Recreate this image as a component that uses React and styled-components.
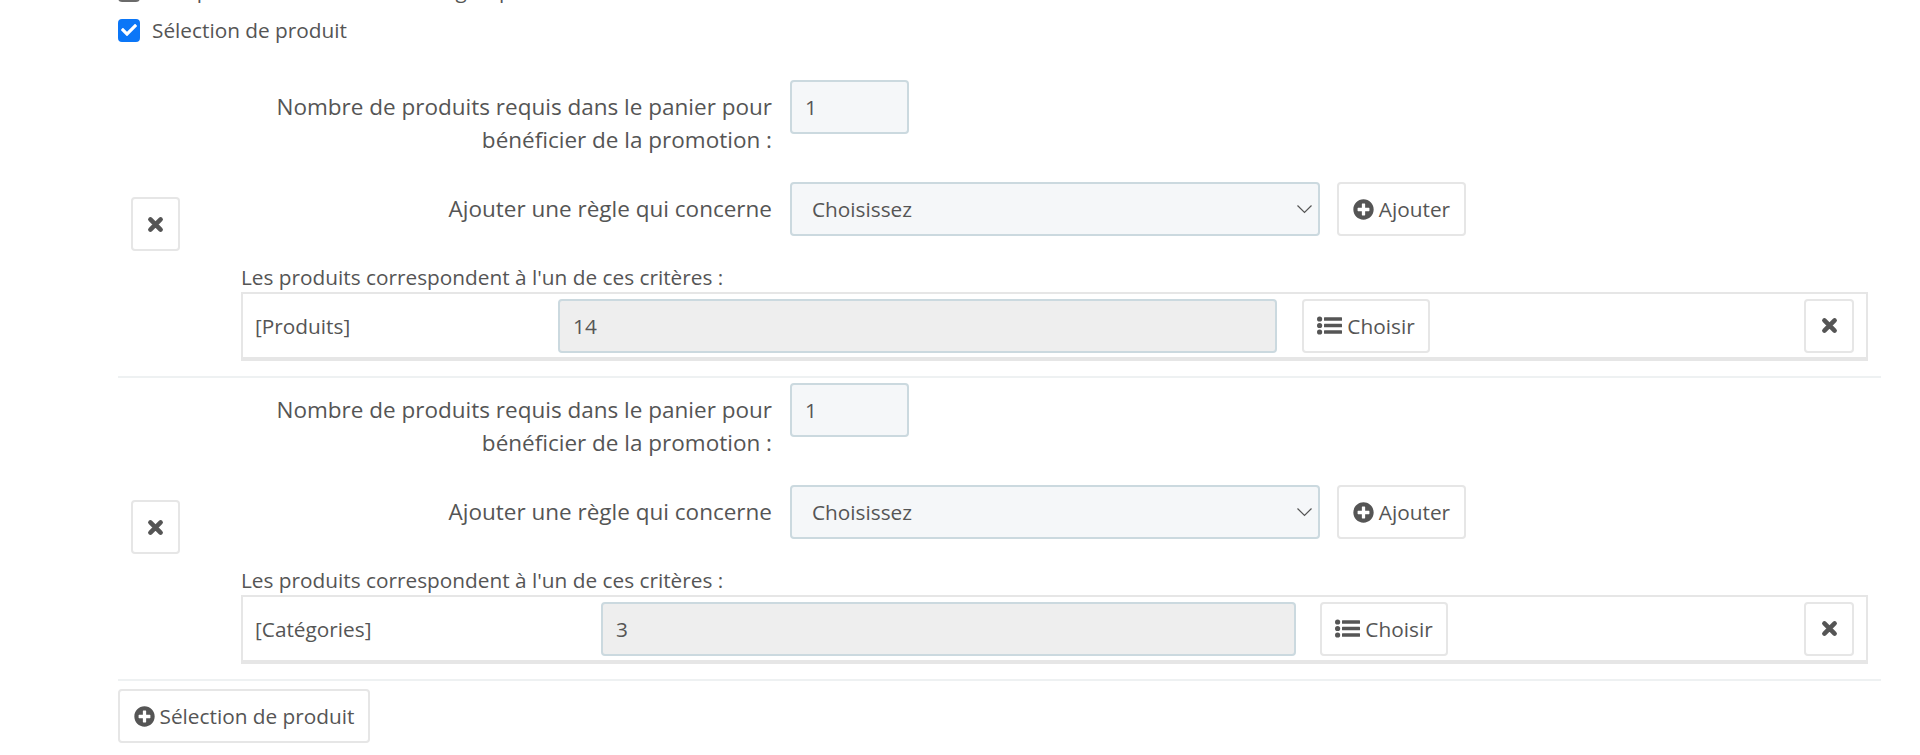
import React from "react";
import styled, { createGlobalStyle } from "styled-components";
import { FaCheck, FaPlusCircle } from "react-icons/fa";

const GlobalStyle = createGlobalStyle`
  html, body {
    margin: 0;
    height: 755px;
    overflow: hidden;
    background: #fff;
  }
  body {
    font-family: "Open Sans", "Liberation Sans", sans-serif;
    font-size: 20.8px;
    color: #555;
  }
`;

const Page = styled.div`
  height: 755px;
  overflow: hidden;
  padding: 0 39px 0 118px;
  box-sizing: border-box;
`;

const OptionList = styled.div`
  margin-top: -26px;
  display: flex;
  flex-direction: column;
  gap: 8px;
`;

const OptionRow = styled.label`
  display: flex;
  align-items: center;
  gap: 12px;
  height: 32px;
  line-height: 32px;
`;

const CheckBox = styled.span`
  width: 22px;
  height: 23px;
  flex: none;
  box-sizing: border-box;
  border-radius: 4px;
  display: flex;
  align-items: center;
  justify-content: center;
  color: #fff;
  font-size: 16px;
  background: ${(p) => (p.$checked ? "#0b76f7" : "#fff")};
  border: 2px solid ${(p) => (p.$checked ? "#0b76f7" : "#6b6b6b")};
`;

const Group = styled.div`
  display: flex;
  align-items: center;
  padding: ${(p) => p.$top}px 13px 15px 0;
  border-bottom: 2px solid #eef1f2;
`;

const RemoveCol = styled.div`
  width: 123px;
  flex: none;
  padding: 7px 0 0 13px;
  box-sizing: border-box;
`;

const Body = styled.div`
  flex: 1;
  min-width: 0;
`;

const FormRow = styled.div`
  display: grid;
  grid-template-columns: 549px auto;
  margin-bottom: ${(p) => p.$gap}px;
`;

const FieldLabel = styled.div`
  text-align: right;
  padding: ${(p) => p.$top}px 18px 0 0;
  font-size: 22.5px;
  line-height: 33px;
`;

const Controls = styled.div`
  display: flex;
  align-items: flex-start;
  gap: 17px;
`;

const TextInput = styled.input`
  display: block;
  width: ${(p) => p.$width}px;
  height: 54px;
  box-sizing: border-box;
  padding: 0 13px;
  flex: none;
  font: inherit;
  color: #555;
  background: ${(p) => (p.readOnly ? "#eeeeee" : "#f5f7f9")};
  border: 2px solid #cbd9df;
  border-radius: 4px;
  outline: none;
`;

const SelectWrap = styled.div`
  position: relative;
  width: 530px;
  height: 54px;
`;

const Select = styled.select`
  width: 100%;
  height: 100%;
  box-sizing: border-box;
  padding: 0 20px;
  font: inherit;
  color: #555;
  background: #f5f7f9;
  border: 2px solid #cbd9df;
  border-radius: 4px;
  appearance: none;
  outline: none;
`;

const Chevron = styled.svg`
  position: absolute;
  right: 7px;
  top: 21px;
  width: 17px;
  height: 11px;
  fill: none;
  stroke: #555;
  stroke-width: 1.2;
`;

const Button = styled.button`
  display: inline-flex;
  align-items: center;
  justify-content: center;
  gap: 5px;
  height: 54px;
  width: ${(p) => p.$width}px;
  flex: none;
  box-sizing: border-box;
  padding: 0;
  font: inherit;
  color: #555;
  background: #fff;
  border: 2px solid #e6e6e6;
  border-radius: 4px;
  white-space: nowrap;
  > svg {
    flex: none;
  }
  > svg.plus {
    font-size: 21px;
  }
`;

const CriteriaTitle = styled.div`
  line-height: 30px;
`;

const CriteriaBox = styled.div`
  display: flex;
  align-items: center;
  height: 69px;
  box-sizing: border-box;
  padding: 0 12px;
  border: 2px solid #e6e6e6;
  border-bottom-width: 4px;
`;

const CriteriaName = styled.div`
  width: ${(p) => p.$width}px;
  flex: none;
`;

const CriteriaChoose = styled.div`
  flex: 1;
  padding-left: ${(p) => p.$gap}px;
`;

const Footer = styled.div`
  margin-top: 8px;
`;

function CrossIcon() {
  return (
    <svg width="17" height="17" viewBox="0 0 17 17" fill="none" stroke="#555" strokeWidth="4.6" strokeLinecap="round">
      <path d="M3.4 3.4 13.6 13.6M13.6 3.4 3.4 13.6" />
    </svg>
  );
}

function ListIcon() {
  return (
    <svg width="25" height="19" viewBox="0 0 25 19" fill="#555">
      <circle cx="2.6" cy="3" r="2.6" />
      <circle cx="2.6" cy="9.5" r="2.6" />
      <circle cx="2.6" cy="16" r="2.6" />
      <rect x="7" y="1.2" width="18" height="3.6" rx="0.5" />
      <rect x="7" y="7.7" width="18" height="3.6" rx="0.5" />
      <rect x="7" y="14.2" width="18" height="3.6" rx="0.5" />
    </svg>
  );
}

function AddButton({ width, children }) {
  return (
    <Button type="button" $width={width}>
      <FaPlusCircle className="plus" />
      {children}
    </Button>
  );
}

function Rule({ top, kind, value, nameWidth, inputWidth, chooseGap }) {
  return (
    <Group $top={top}>
      <RemoveCol>
        <Button type="button" $width={49}>
          <CrossIcon />
        </Button>
      </RemoveCol>
      <Body>
        <FormRow $gap={26}>
          <FieldLabel $top={10}>
            Nombre de produits requis dans le panier pour
            <br />
            bénéficier de la promotion :
          </FieldLabel>
          <Controls>
            <TextInput $width={119} defaultValue="1" />
          </Controls>
        </FormRow>
        <FormRow $gap={26}>
          <FieldLabel $top={10}>Ajouter une règle qui concerne</FieldLabel>
          <Controls>
            <SelectWrap>
              <Select defaultValue="">
                <option value="">Choisissez</option>
              </Select>
              <Chevron viewBox="0 0 17 11">
                <path d="M1.5 2.5 8.5 9.5 15.5 2.5" />
              </Chevron>
            </SelectWrap>
            <AddButton width={129}>Ajouter</AddButton>
          </Controls>
        </FormRow>
        <CriteriaTitle>Les produits correspondent à l'un de ces critères :</CriteriaTitle>
        <CriteriaBox>
          <CriteriaName $width={nameWidth}>{kind}</CriteriaName>
          <TextInput $width={inputWidth} readOnly defaultValue={value} />
          <CriteriaChoose $gap={chooseGap}>
            <Button type="button" $width={128}>
              <ListIcon />
              Choisir
            </Button>
          </CriteriaChoose>
          <Button type="button" $width={50}>
            <CrossIcon />
          </Button>
        </CriteriaBox>
      </Body>
    </Group>
  );
}

export default function App() {
  return (
    <Page>
      <GlobalStyle />
      <OptionList>
        <OptionRow>
          <CheckBox />
          Compatibilité avec les autres règles panier
        </OptionRow>
        <OptionRow>
          <CheckBox $checked>
            <FaCheck />
          </CheckBox>
          Sélection de produit
        </OptionRow>
      </OptionList>
      <Rule top={34} kind="[Produits]" value="14" nameWidth={303} inputWidth={719} chooseGap={25} />
      <Rule top={5} kind="[Catégories]" value="3" nameWidth={346} inputWidth={695} chooseGap={24} />
      <Footer>
        <AddButton width={252}>Sélection de produit</AddButton>
      </Footer>
    </Page>
  );
}
